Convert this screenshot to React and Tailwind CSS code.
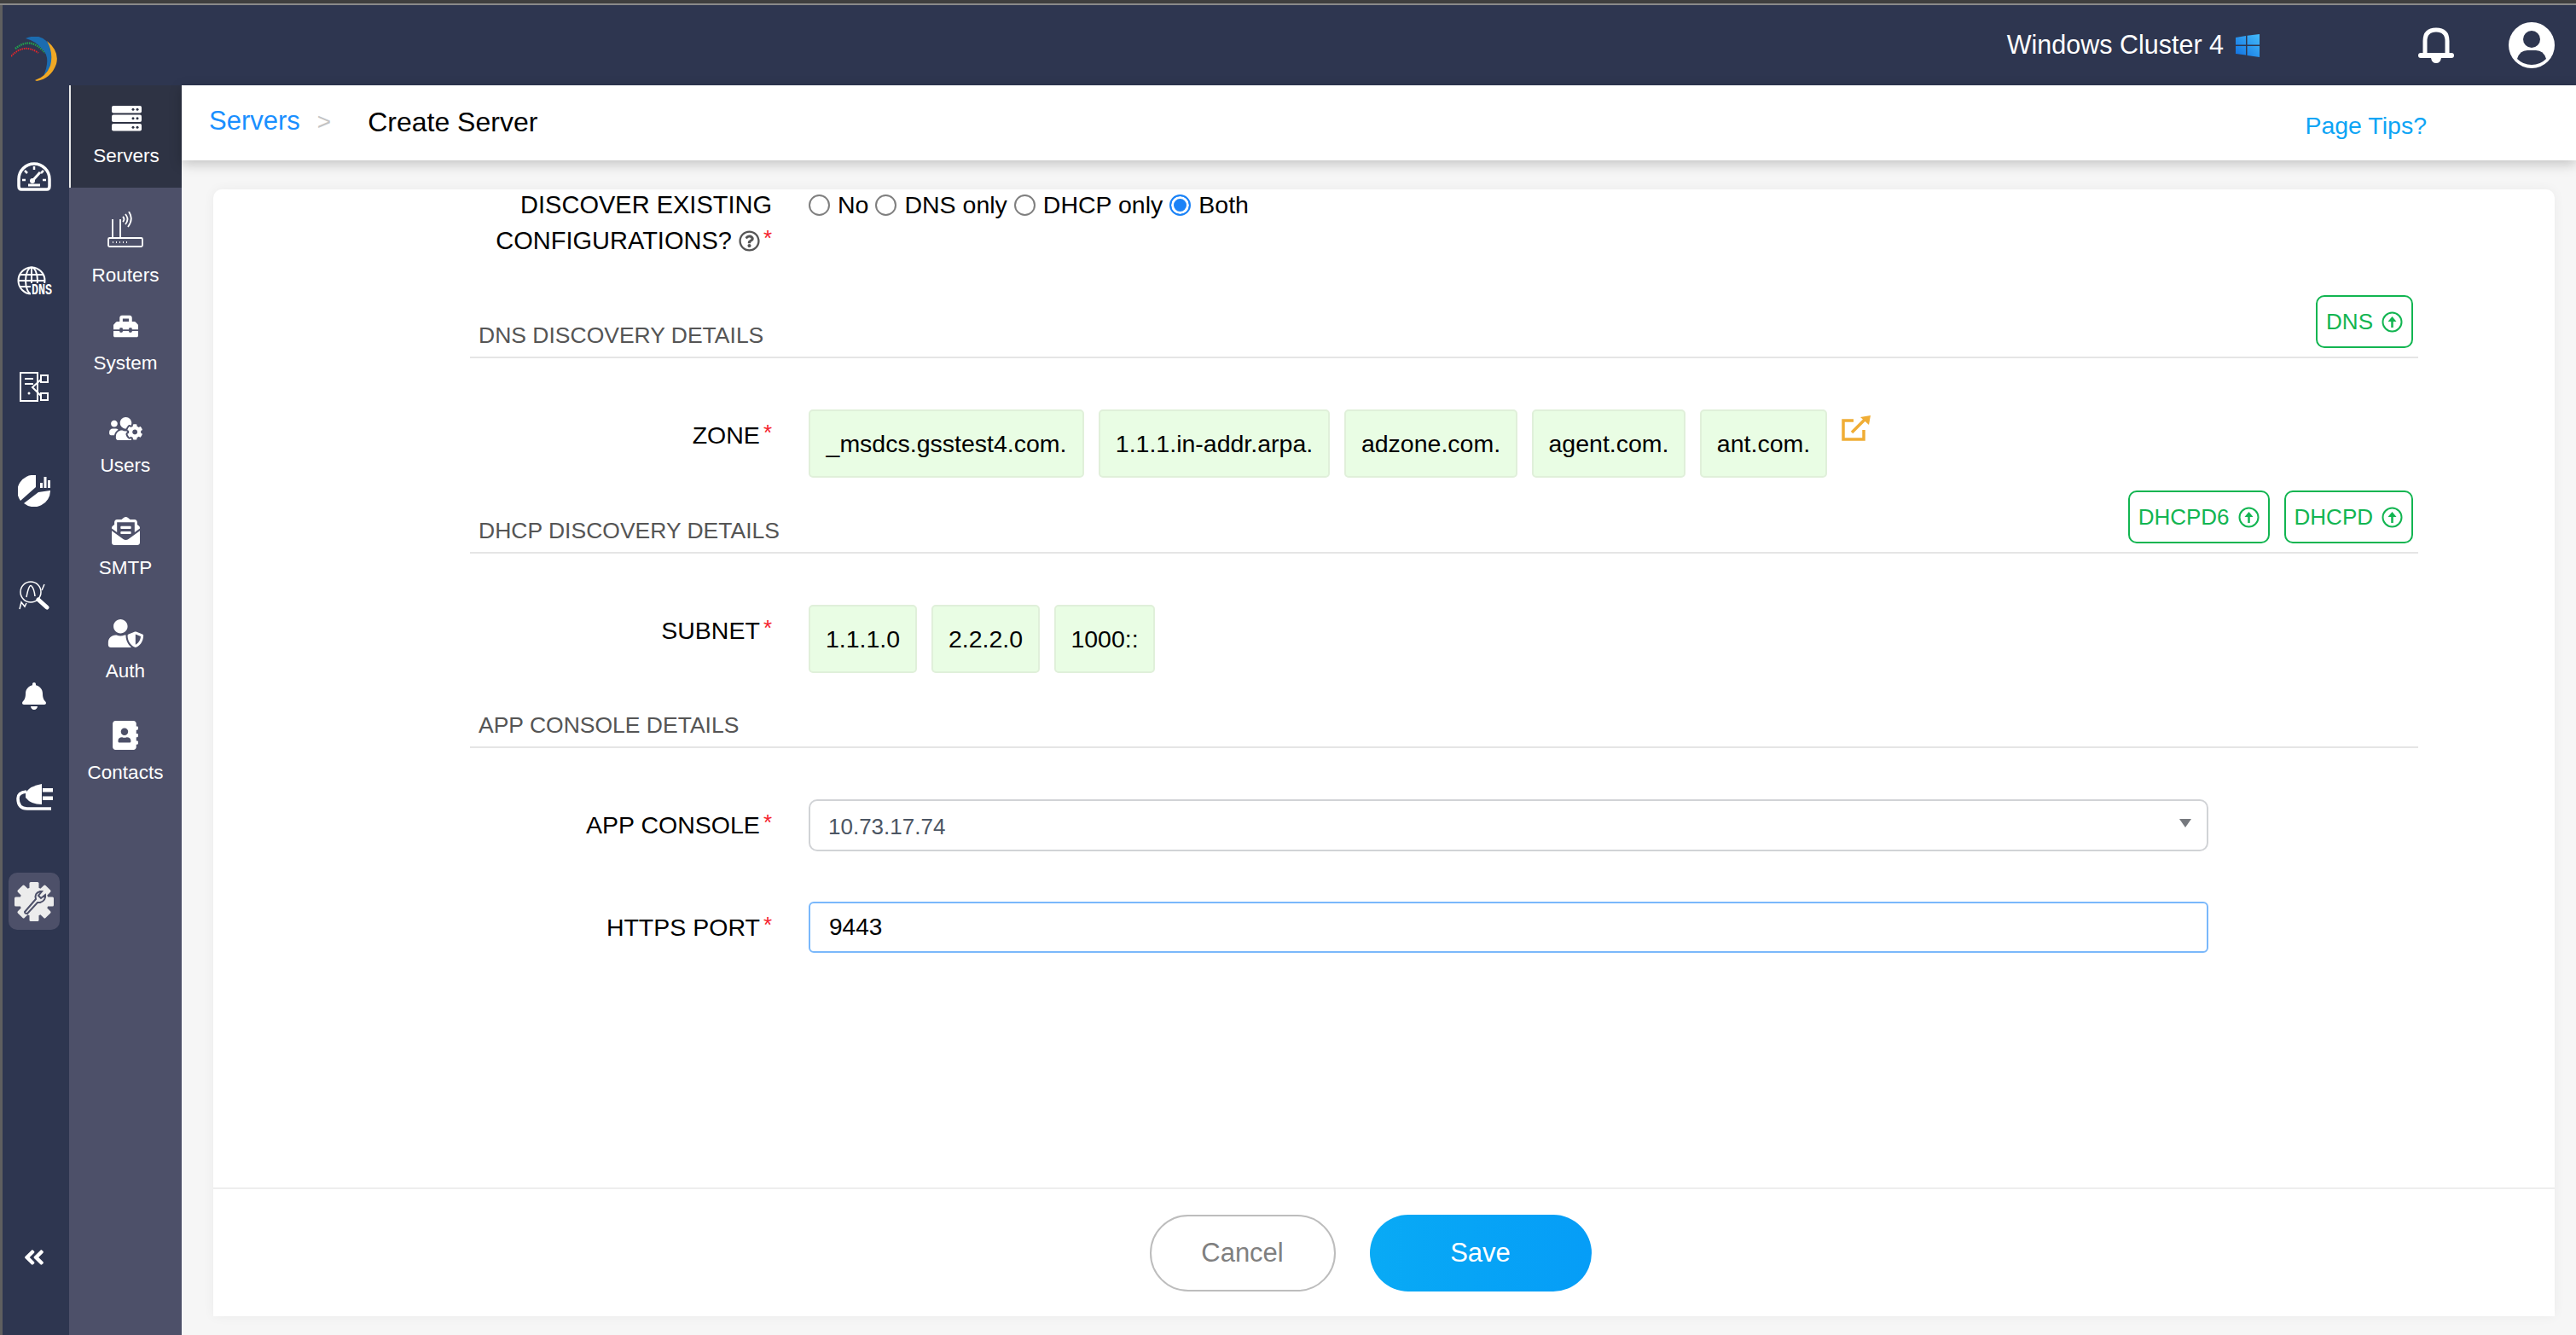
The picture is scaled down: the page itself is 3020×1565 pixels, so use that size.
import React from 'react';
import { FaBell, FaToolbox, FaUsersCog, FaEnvelopeOpenText, FaUserShield, FaAddressBook, FaRegQuestionCircle, FaAngleDoubleLeft } from 'react-icons/fa';

const Logo = () => (
  <svg width="54" height="53" viewBox="13 43 54 53" fill="none">
    <path d="M13 66 Q28 50 45 62" stroke="#e6262b" strokeWidth="2" strokeDasharray="1.5 1" />
    <path d="M18 57 Q36 42 53 62" stroke="#22a04e" strokeWidth="2.5" strokeDasharray="1.5 1" />
    <path d="M30 45 Q52 36 62 60 Q64 76 51 89 Q60 68 50 58 Q42 48 30 45Z" fill="#1b6cb0" />
    <path d="M55 48 Q70 60 66 75 Q60 92 43 95 L41 94 Q54 90 59 77 Q63 62 55 48Z" fill="#f0a824" />
  </svg>
);

const GaugeIcon = () => (
  <svg width="40" height="35" viewBox="0 0 40 35" fill="none" stroke="white">
    <path d="M5 33 Q2 33 2 29 L2 21 A18 18 0 0 1 38 21 L38 29 Q38 33 35 33Z" strokeWidth="3.500" />
    <path d="M20 6v4M9 11l3 3M31 11l-3 3M6 22h4M34 22h-4" strokeWidth="2.500" />
    <path d="M13 28h14" strokeWidth="3" />
    <path d="M18 23 L27 13" strokeWidth="3" />
    <circle cx="18" cy="23" r="3" fill="white" stroke="none" />
  </svg>
);

const GlobeIcon = () => (
  <svg width="41" height="34" viewBox="0 0 41 34" fill="none" stroke="white" strokeWidth="2" className="overflow-visible">
    <circle cx="17" cy="17" r="15.5" />
    <ellipse cx="17" cy="17" rx="7" ry="15.5" />
    <path d="M17 1v31M3 10h28M1.500 17h31M3 24h28" />
    <rect x="16" y="20" width="25" height="14" fill="#2e3650" stroke="none" />
    <text x="17" y="33" fill="white" stroke="none" fontSize="18" fontWeight="700" fontFamily="Liberation Mono, monospace" textLength="24" lengthAdjust="spacingAndGlyphs">DNS</text>
  </svg>
);

const NodeIcon = () => (
  <svg width="34" height="35" viewBox="0 0 34 35" fill="none" stroke="white" strokeWidth="2">
    <rect x="1" y="1" width="20" height="33" />
    <path d="M6 8h10M6 14h10" />
    <circle cx="11" cy="25" r="1.500" fill="white" stroke="none" />
    <rect x="25" y="4" width="8" height="8" />
    <rect x="25" y="25" width="8" height="8" />
    <path d="M25 9 L15 18 L25 28" />
  </svg>
);

const PieIcon = () => (
  <svg width="38" height="37" viewBox="0 0 38 37" fill="white">
    <path d="M21 0 L21 14 L3 30 A19 19 0 0 1 21 0Z" />
    <path d="M24 20 L38 18 A19 19 0 0 1 7 33Z" />
    <path d="M26 9h3v6h-3zM30.500 2h3v13h-3zM35 6h3v9h-3z" />
  </svg>
);

const AnalysisIcon = () => (
  <svg width="36" height="34" viewBox="0 0 36 34" fill="none" stroke="white">
    <circle cx="14" cy="13" r="12" strokeWidth="1.500" />
    <path d="M9 19 Q12 3 15 6 Q18 9 19 18" strokeWidth="1.500" />
    <path d="M1 33 L3 25 L7 30 L9 26" strokeWidth="1.500" />
    <path d="M27 11 L30 4" strokeWidth="1.500" />
    <path d="M23 22 L33 31" strokeWidth="5" strokeLinecap="round" />
  </svg>
);

const PlugIcon = () => (
  <svg width="43" height="32" viewBox="0 0 43 32" fill="none">
    <path d="M11 10 Q17 2 30 0 V24 Q17 24 11 16Z" fill="white" />
    <path d="M31 5h12v4.500H31zM31 14.500h12V19H31z" fill="white" />
    <path d="M12 9 Q2 10 2 17 Q2 29 13 29 H41" stroke="white" strokeWidth="3.500" />
  </svg>
);

const GearWrench = () => (
  <svg width="46" height="46" viewBox="0 0 46 46" fill="#ececec">
    <circle cx="23" cy="23" r="17" />
    {[0, 45, 90, 135, 180, 225, 270, 315].map((a) => (
      <rect key={a} x="17.500" y="0" width="11" height="10" rx="1.500" transform={`rotate(${a} 23 23)`} />
    ))}
    <path d="M12 35 L25 20 Q23 13 30 11 L32 11 L28 16 L31 19 L36 15 Q37 22 30 24 L27 24 L15 37 Q12 37 12 35Z" fill="none" stroke="#4d5069" strokeWidth="2" />
  </svg>
);

const ServersIcon = () => (
  <svg width="35" height="30" viewBox="0 0 35 30">
    {[0, 10.5, 21].map((y) => (
      <g key={y}>
        <rect x="0" y={y} width="35" height="8.500" rx="2" fill="white" />
        <circle cx="25" cy={y + 4.25} r="1.500" fill="#2e3344" />
        <circle cx="30" cy={y + 4.25} r="1.500" fill="#2e3344" />
      </g>
    ))}
  </svg>
);

const RouterIcon = () => (
  <svg width="42" height="42" viewBox="0 0 42 42" fill="none" stroke="white" strokeWidth="1.800">
    <rect x="1" y="31" width="40" height="10" rx="1.500" />
    <path d="M6 36h1M10 36h1M14 36h1M18 36h1M22 36h1" strokeWidth="2" />
    <path d="M6 31V9M15 31V9" />
    <path d="M18 6 Q21 9 18 12M21 3 Q26 9 21 15M25 0 Q31 9 24 18" />
  </svg>
);

const WindowsLogo = () => (
  <svg width="28" height="27" viewBox="0 0 28 27">
    <defs>
      <linearGradient id="win" x1="1" y1="0" x2="0" y2="1">
        <stop offset="0" stopColor="#45bcfb" />
        <stop offset="1" stopColor="#0f6fe0" />
      </linearGradient>
    </defs>
    <path d="M0 4 L12 2 V12.500 H0Z M13.500 1.700 L28 0 V12.500 H13.500Z M0 14 H12 V24.500 L0 23Z M13.500 14 H28 V27 L13.500 25Z" fill="url(#win)" />
  </svg>
);

const HeaderBell = () => (
  <svg width="42" height="42" viewBox="0 0 42 42" fill="none" stroke="white">
    <path d="M8 33 V16 Q8 3 21 3 Q34 3 34 16 V33" strokeWidth="5" />
    <path d="M3 33 H39" strokeWidth="6" strokeLinecap="round" />
    <path d="M15 36 H27 Q26 42 21 42 Q16 42 15 36Z" fill="white" stroke="none" />
  </svg>
);

const Avatar = () => (
  <svg width="54" height="54" viewBox="0 0 54 54">
    <circle cx="27" cy="27" r="27" fill="white" />
    <circle cx="27" cy="20" r="10" fill="#2e3650" />
    <path d="M10 43 Q13 33 22 33 H32 Q41 33 44 43 Q37 50 27 50 Q17 50 10 43Z" fill="#2e3650" />
  </svg>
);

const UploadIcon = () => (
  <svg width="25" height="25" viewBox="0 0 25 25" fill="none" stroke="#12b551" strokeWidth="2">
    <circle cx="12.500" cy="12.500" r="11" />
    <path d="M12.500 19V9" strokeWidth="2.500" />
    <path d="M7.500 12 L12.500 6 L17.500 12Z" fill="#12b551" stroke="none" />
  </svg>
);

const ExternalIcon = () => (
  <svg width="34" height="30" viewBox="0 0 34 30" fill="none" stroke="#f0ad35">
    <path d="M14 6 H2 V28 H26 V17" strokeWidth="3.500" />
    <path d="M12 20 L29 3" strokeWidth="3.500" />
    <path d="M22 2 L34 0 L32 11Z" fill="#f0ad35" stroke="none" />
  </svg>
);

const railItems = [
  { icon: <GaugeIcon />, box: 'mt-[92px]' },
  { icon: <GlobeIcon />, box: 'mt-[87px]' },
  { icon: <NodeIcon />, box: 'mt-[88px]' },
  { icon: <PieIcon />, box: 'mt-[86px]' },
  { icon: <AnalysisIcon />, box: 'mt-[87px]' },
  { icon: <FaBell className="text-white w-[28px] h-[32px]" />, box: 'mt-[82px]' },
  { icon: <PlugIcon />, box: 'mt-[83px]' },
];

const sideItems = [
  { label: 'Routers', icon: <RouterIcon />, pad: 'pt-[28px]', gap: 'gap-[20px]' },
  { label: 'System', icon: <FaToolbox className="text-white w-[35px] h-[29px]" />, pad: 'pt-[32px]', gap: 'gap-[16px]' },
  { label: 'Users', icon: <FaUsersCog className="text-white w-[43px] h-[31px]" />, pad: 'pt-[48px]', gap: 'gap-[15px]' },
  { label: 'SMTP', icon: <FaEnvelopeOpenText className="text-white w-[35px] h-[33px]" />, pad: 'pt-[47px]', gap: 'gap-[14px]' },
  { label: 'Auth', icon: <FaUserShield className="text-white w-[43px] h-[33px]" />, pad: 'pt-[47px]', gap: 'gap-[15px]' },
  { label: 'Contacts', icon: <FaAddressBook className="text-white w-[30px] h-[34px]" />, pad: 'pt-[45px]', gap: 'gap-[14px]' },
];

const Star = () => <span className="text-[#f5222d] text-[26px] leading-none relative -top-[4px] ml-[4px]">*</span>;

const Label = ({ children }) => (
  <div className="w-[354px] shrink-0 text-right text-[28.5px] leading-[42px] mt-[9px] text-black">
    {children}
    <Star />
  </div>
);

const Section = ({ title, buttons = [], top }) => (
  <div className={`flex items-end justify-between border-b-2 border-[#e5e5e5] pb-[10px] pl-[10px] pr-[6px] ${top}`}>
    <span className="text-[26.5px] leading-[30px] text-[#555555]">{title}</span>
    <div className="flex gap-[17px]">
      {buttons.map((b) => (
        <div key={b} className="h-[62px] px-[10px] flex items-center gap-[10px] border-2 border-[#12b551] rounded-[10px] text-[#12b551] text-[26px]">
          {b}
          <UploadIcon />
        </div>
      ))}
    </div>
  </div>
);

const Chip = ({ children, width }) => (
  <div className={`h-[80px] flex items-center justify-center bg-[#e9fde4] border-2 border-[#e0f0da] rounded-[5px] text-[28.5px] text-black ${width}`}>
    {children}
  </div>
);

const Radio = ({ label, checked }) => (
  <label className="flex items-center gap-[9px] text-[28.5px] leading-[42px] text-black">
    <input
      type="radio"
      name="discover"
      defaultChecked={checked}
      className="appearance-none w-[25px] h-[25px] rounded-full border-2 border-[#7f7f7f] checked:border-[#1a82f7] checked:bg-[#1a82f7] checked:shadow-[inset_0_0_0_3px_white]"
    />
    {label}
  </label>
);

export default function App() {
  return (
    <div className="w-[3020px] h-[1565px] flex flex-col overflow-hidden bg-[#f6f6f6] font-['Liberation_Sans',Arial,sans-serif]">
      <div className="h-[6px] shrink-0 bg-[#3f3f3f] border-b-2 border-[#8a8a8a]" />
      <div className="flex flex-1 min-h-0 border-l-[3px] border-[#5f5f5f]">
        {/* icon rail */}
        <aside className="w-[78px] shrink-0 bg-[#2e3650] flex flex-col items-center pr-[4px]">
          <div className="mt-[37px] h-[53px]"><Logo /></div>
          {railItems.map((item, i) => (
            <div key={i} className={`h-[36px] flex items-center justify-center ${item.box}`}>{item.icon}</div>
          ))}
          <div className="mt-[70px] w-[60px] h-[67px] shrink-0 rounded-[10px] bg-[#4d5069] flex items-center justify-center">
            <GearWrench />
          </div>
          <div className="mt-auto mb-[77px]">
            <FaAngleDoubleLeft className="text-white w-[28px] h-[28px]" />
          </div>
        </aside>

        <div className="flex-1 min-w-0 flex flex-col">
          <header className="h-[94px] shrink-0 bg-[#2e3650] flex items-center justify-end text-white">
            <span className="text-[30.5px] mr-[14px] -mt-[1px]">Windows Cluster 4</span>
            <WindowsLogo />
            <div className="ml-[186px]"><HeaderBell /></div>
            <div className="ml-[64px] mr-[25px]"><Avatar /></div>
          </header>

          <div className="flex-1 min-h-0 flex">
            {/* sub navigation */}
            <nav className="w-[132px] shrink-0 bg-[#4d5069] text-white">
              <div className="h-[120px] pt-[24px] flex flex-col items-center gap-[16px] bg-[#2e3344] border-l-2 border-[#e8e8e8] text-[22.5px] leading-[26px]">
                <ServersIcon />
                Servers
              </div>
              {sideItems.map((item) => (
                <div key={item.label} className={`flex flex-col items-center text-[22.5px] leading-[26px] ${item.pad} ${item.gap}`}>
                  {item.icon}
                  {item.label}
                </div>
              ))}
            </nav>

            <main className="flex-1 min-w-0 flex flex-col">
              <div className="h-[88px] shrink-0 bg-white shadow-[0_4px_14px_rgba(0,0,0,0.22)] flex items-center pl-[32px] pr-[175px] relative">
                <span className="text-[31px] text-[#1a8fff] -mt-[3px]">Servers</span>
                <span className="text-[28px] text-[#c4c4c4] ml-[20px] -mt-[3px]">&gt;</span>
                <span className="text-[32px] text-black ml-[43px] -mt-[3px]">Create Server</span>
                <span className="ml-auto mt-[6px] text-[28.5px] text-[#0ea5f5]">Page Tips?</span>
              </div>

              {/* form card */}
              <div className="flex-1 min-h-0 ml-[37px] mr-[25px] mt-[34px] mb-[22px] bg-white rounded-t-[10px] shadow-[0_0_14px_rgba(0,0,0,0.05)] flex flex-col">
                <div className="flex-1 pl-[301px] pr-[160px] -mt-[3px]">
                  <div className="flex">
                    <div className="w-[354px] shrink-0 text-right text-[29px] leading-[42px] text-black">
                      DISCOVER EXISTING
                      <br />
                      CONFIGURATIONS?
                      <FaRegQuestionCircle className="inline w-[25px] h-[25px] text-[#555555] ml-[8px] -mt-[4px]" />
                      <Star />
                    </div>
                    <div className="ml-[43px] flex gap-[8px] items-start">
                      <Radio label="No" />
                      <Radio label="DNS only" />
                      <Radio label="DHCP only" />
                      <Radio label="Both" checked />
                    </div>
                  </div>

                  <Section title="DNS DISCOVERY DETAILS" buttons={['DNS']} top="mt-[43px]" />
                  <div className="flex mt-[60px]">
                    <Label>ZONE</Label>
                    <div className="ml-[43px] flex items-start gap-[17px]">
                      <Chip width="w-[323px]">_msdcs.gsstest4.com.</Chip>
                      <Chip width="w-[271px]">1.1.1.in-addr.arpa.</Chip>
                      <Chip width="w-[203px]">adzone.com.</Chip>
                      <Chip width="w-[180px]">agent.com.</Chip>
                      <Chip width="w-[149px]">ant.com.</Chip>
                      <div className="mt-[7px]"><ExternalIcon /></div>
                    </div>
                  </div>

                  <Section title="DHCP DISCOVERY DETAILS" buttons={['DHCPD6', 'DHCPD']} top="mt-[15px]" />
                  <div className="flex mt-[60px]">
                    <Label>SUBNET</Label>
                    <div className="ml-[43px] flex items-start gap-[17px]">
                      <Chip width="w-[127px]">1.1.1.0</Chip>
                      <Chip width="w-[127px]">2.2.2.0</Chip>
                      <Chip width="w-[118px]">1000::</Chip>
                    </div>
                  </div>

                  <Section title="APP CONSOLE DETAILS" top="mt-[46px]" />
                  <div className="flex mt-[60px]">
                    <Label>APP CONSOLE</Label>
                    <div className="ml-[43px] w-[1641px] h-[61px] pl-[21px] pr-[18px] flex items-center justify-between border-2 border-[#d1d3d6] rounded-[10px] text-[26px] text-[#4b5563]">
                      <span className="mt-[3px]">10.73.17.74</span>
                      <span className="w-0 h-0 -mt-[6px] border-x-[7px] border-x-transparent border-t-[10px] border-t-[#76797e]" />
                    </div>
                  </div>
                  <div className="flex mt-[59px]">
                    <Label>HTTPS PORT</Label>
                    <input
                      readOnly
                      value="9443"
                      className="ml-[43px] w-[1641px] h-[60px] pl-[22px] border-2 border-[#7ab8fb] rounded-[6px] text-[28px] text-black outline-none"
                    />
                  </div>
                </div>

                <div className="h-[151px] shrink-0 border-t-2 border-[#eeeeee] flex justify-center pt-[30px] gap-[40px] pr-[32px]">
                  <button className="w-[218px] h-[90px] rounded-[45px] border-2 border-[#bdbdbd] bg-white text-[#808080] text-[31px]">Cancel</button>
                  <button className="w-[260px] h-[90px] rounded-[45px] bg-gradient-to-r from-[#09aaf5] to-[#069df7] text-white text-[31px]">Save</button>
                </div>
              </div>
            </main>
          </div>
        </div>
      </div>
    </div>
  );
}
